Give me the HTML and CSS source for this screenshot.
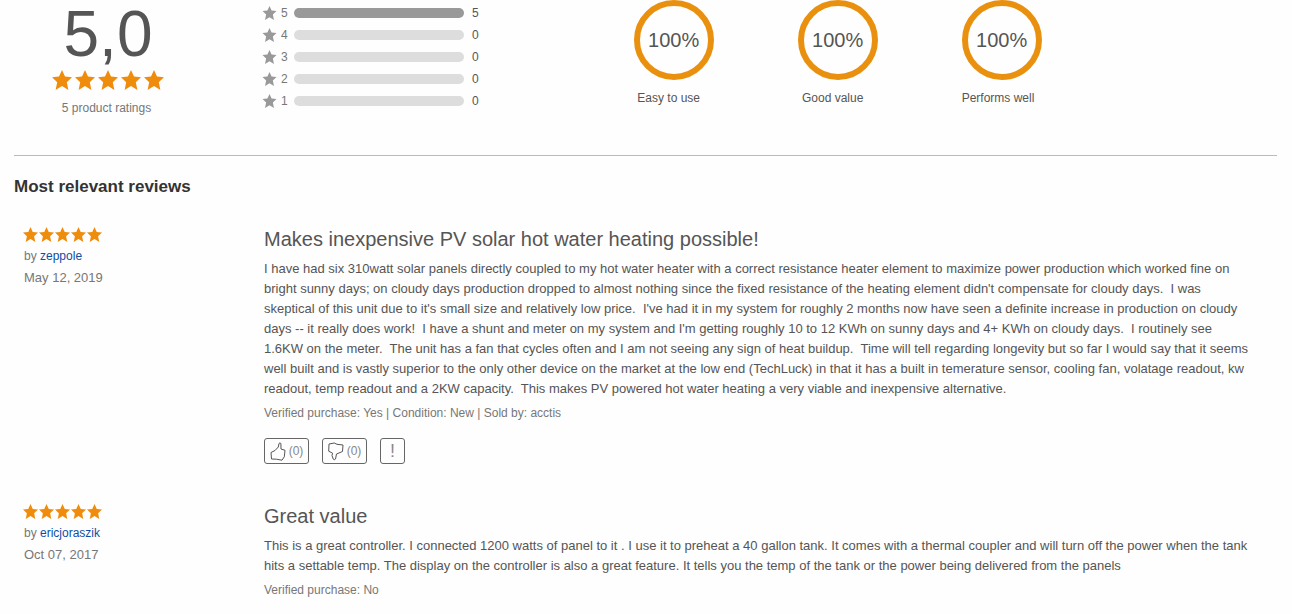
FILE: index.html
```html
<!DOCTYPE html>
<html lang="en">
<head>
    <meta charset="UTF-8">
    <meta name="viewport" content="width=device-width, initial-scale=1.0">
    <title>Ratings and Reviews</title>
    <link rel="stylesheet" href="styles.css">
</head>
<body>

<!-- Shared icons -->
<svg class="icon-defs" aria-hidden="true">
    <symbol id="star" viewBox="0 0 20 20">
        <path d="M10 0L13 6.600 20 7.300 14.800 12.300 16.400 20 10 16.100 3.600 20 5.200 12.300 0 7.300 7 6.600Z"/>
    </symbol>
    <symbol id="thumb-up" viewBox="0 0 16 19">
        <path d="M1 10.500L5 8.500 8.300 5 9 1.500Q10 .3 10.900 1.500L11 7 15 8.300 14.300 14.800 12 18.200 6.300 17.200 1.500 17Z"/>
    </symbol>
    <symbol id="thumb-down" viewBox="0 0 16 19">
        <path d="M1 2L6.300 1 9 2.300 15 3 14.500 9.500 8.500 12 7.500 17 Q6 18.700 5.200 17L4 13.500 4.600 11.200 .7 9.200Z"/>
    </symbol>
</svg>

<!-- Rating summary -->
<section class="summary">
    <div class="overall">
        <div class="score">5,0</div>
        <div class="stars stars-big" role="img" aria-label="5 out of 5 stars">
            <svg><use href="#star"/></svg><svg><use href="#star"/></svg><svg><use href="#star"/></svg><svg><use href="#star"/></svg><svg><use href="#star"/></svg>
        </div>
        <div class="total">5 product ratings</div>
    </div>

    <ul class="histogram">
        <li><svg><use href="#star"/></svg><span class="level">5</span><span class="bar full"></span><span>5</span></li>
        <li><svg><use href="#star"/></svg><span class="level">4</span><span class="bar"></span><span>0</span></li>
        <li><svg><use href="#star"/></svg><span class="level">3</span><span class="bar"></span><span>0</span></li>
        <li><svg><use href="#star"/></svg><span class="level">2</span><span class="bar"></span><span>0</span></li>
        <li><svg><use href="#star"/></svg><span class="level">1</span><span class="bar"></span><span>0</span></li>
    </ul>

    <div class="aspects">
        <div class="aspect">
            <div class="ring">100%</div>
            <div class="aspect-name">Easy to use</div>
        </div>
        <div class="aspect">
            <div class="ring">100%</div>
            <div class="aspect-name">Good value</div>
        </div>
        <div class="aspect">
            <div class="ring">100%</div>
            <div class="aspect-name">Performs well</div>
        </div>
    </div>
</section>

<!-- Reviews -->
<section class="reviews">
    <h2>Most relevant reviews</h2>

    <article class="review">
        <div class="author">
            <div class="stars" role="img" aria-label="5 out of 5 stars">
                <svg><use href="#star"/></svg><svg><use href="#star"/></svg><svg><use href="#star"/></svg><svg><use href="#star"/></svg><svg><use href="#star"/></svg>
            </div>
            <div class="by">by <a href="#">zeppole</a></div>
            <div class="date">May 12, 2019</div>
        </div>
        <div class="content">
            <h3>Makes inexpensive PV solar hot water heating possible!</h3>
            <p class="text">I have had six 310watt solar panels directly coupled to my hot water heater with a correct resistance heater element to maximize power production which worked fine on bright sunny days; on cloudy days production dropped to almost nothing since the fixed resistance of the heating element didn't compensate for cloudy days.&nbsp; I was skeptical of this unit due to it's small size and relatively low price.&nbsp; I've had it in my system for roughly 2 months now have seen a definite increase in production on cloudy days -- it really does work!&nbsp; I have a shunt and meter on my system and I'm getting roughly 10 to 12 KWh on sunny days and 4+ KWh on cloudy days.&nbsp; I routinely see 1.6KW on the meter.&nbsp; The unit has a fan that cycles often and I am not seeing any sign of heat buildup.&nbsp; Time will tell regarding longevity but so far I would say that it seems well built and is vastly superior to the only other device on the market at the low end (TechLuck) in that it has a built in temerature sensor, cooling fan, volatage readout, kw readout, temp readout and a 2KW capacity.&nbsp; This makes PV powered hot water heating a very viable and inexpensive alternative.</p>
            <p class="meta">Verified purchase: Yes | Condition: New | Sold by: acctis</p>
            <div class="actions">
                <button type="button" class="vote" aria-label="Helpful (0)"><svg><use href="#thumb-up"/></svg>(0)</button>
                <button type="button" class="vote" aria-label="Not helpful (0)"><svg><use href="#thumb-down"/></svg>(0)</button>
                <button type="button" class="report" aria-label="Report">!</button>
            </div>
        </div>
    </article>

    <article class="review">
        <div class="author">
            <div class="stars" role="img" aria-label="5 out of 5 stars">
                <svg><use href="#star"/></svg><svg><use href="#star"/></svg><svg><use href="#star"/></svg><svg><use href="#star"/></svg><svg><use href="#star"/></svg>
            </div>
            <div class="by">by <a href="#">ericjoraszik</a></div>
            <div class="date">Oct 07, 2017</div>
        </div>
        <div class="content">
            <h3>Great value</h3>
            <p class="text">This is a great controller. I connected 1200 watts of panel to it . I use it to preheat a 40 gallon tank. It comes with a thermal coupler and will turn off the power when the tank hits a settable temp. The display on the controller is also a great feature. It tells you the temp of the tank or the power being delivered from the panels</p>
            <p class="meta">Verified purchase: No</p>
        </div>
    </article>
</section>

</body>
</html>
```
FILE: styles.css
```css
* {
    box-sizing: border-box;
}
body {
    margin: 0;
    padding: 0 15px 0 14px;
    background-color: #fefefe;
    color: #555;
    font-family: "Liberation Sans", Arial, sans-serif;
    font-size: 12px;
    line-height: 20px;
}
h2, h3, p, ul {
    margin: 0;
    padding: 0;
}
.icon-defs {
    position: absolute;
    width: 0;
    height: 0;
}

/* Rating summary */
.summary {
    display: flex;
    align-items: flex-start;
    padding-bottom: 37px;
    border-bottom: 1px solid #bbb;
}
.overall {
    width: 188px;
    margin-right: 60px;
    display: flex;
    flex-direction: column;
    align-items: center;
}
.score {
    font-size: 64px;
    line-height: 68px;
    margin-bottom: 2px;
}
.stars {
    display: flex;
    gap: 1px;
}
.stars svg {
    width: 15px;
    height: 15px;
    fill: #ef8c0c;
}
.stars-big {
    gap: 3px;
}
.stars-big svg {
    width: 20px;
    height: 20px;
}
.total {
    margin-top: 8px;
    padding-right: 3px;
    color: #777;
}
.histogram {
    list-style: none;
    padding-top: 2px;
    margin-right: 155px;
}
.histogram li {
    display: flex;
    align-items: center;
    height: 22px;
}
.histogram svg {
    width: 15px;
    height: 14px;
    fill: #999;
}
.level {
    width: 13px;
    margin-left: 4px;
    color: #777;
}
.bar {
    width: 170px;
    height: 10px;
    margin-right: 8px;
    border-radius: 5px;
    background-color: #ddd;
}
.bar.full {
    background-color: #999;
}
.aspects {
    display: flex;
    gap: 84px;
}
.aspect {
    width: 80px;
}
.ring {
    display: flex;
    justify-content: center;
    align-items: center;
    width: 80px;
    height: 80px;
    border: 6px solid #ea900f;
    border-radius: 50%;
    font-size: 20px;
}
.aspect-name {
    margin: 8px 10px 0 0;
    text-align: center;
    white-space: nowrap;
}

/* Reviews */
h2 {
    padding-top: 21px;
    color: #333;
    font-size: 17px;
    line-height: 20px;
}
.review {
    display: flex;
    margin-bottom: 40px;
}
h2 + .review {
    margin-top: 30px;
}
.author {
    width: 250px;
    flex-shrink: 0;
    padding-left: 9px;
}
.author .stars {
    margin-bottom: 4px;
}
.by, .date {
    padding-left: 1px;
    color: #777;
}
.by a {
    color: #0f4ea5;
    text-decoration: none;
}
.date {
    margin-top: 2px;
    font-size: 13px;
}
.content {
    flex: 1;
    padding-right: 25px;
}
h3 {
    margin-bottom: 8px;
    font-size: 20px;
    font-weight: normal;
    line-height: 24px;
}
.text {
    font-size: 13px;
}
.meta {
    margin-top: 4px;
    color: #777;
}
.actions {
    display: flex;
    gap: 13px;
    margin-top: 15px;
}
.actions button {
    display: flex;
    justify-content: center;
    align-items: center;
    height: 26px;
    padding: 0 4px;
    border: 1px solid #666;
    border-radius: 3px;
    background-color: #fefefe;
    color: #888;
    font-family: inherit;
    font-size: 12px;
}
.actions .vote {
    width: 45px;
}
.vote svg {
    width: 16px;
    height: 19px;
    margin-right: 3px;
    fill: none;
    stroke: #555;
    stroke-width: 1;
}
.actions .report {
    width: 25px;
    font-size: 18px;
}
```
